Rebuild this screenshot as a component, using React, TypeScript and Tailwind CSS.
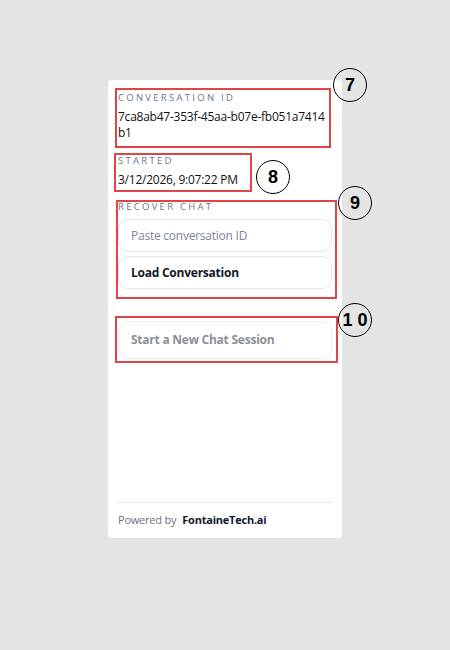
import React, { useState } from 'react';

const font = { fontFamily: '"Open Sans", "Noto Sans", sans-serif' };

const Marker: React.FC<{ label: string; className: string }> = ({ label, className }) => (
  <div
    className={`absolute w-[34px] h-[34px] rounded-full border-[1.5px] border-black flex items-center justify-center text-[18px] font-bold text-black ${className}`}
    style={{ fontFamily: '"Liberation Sans", Arial, sans-serif' }}
  >
    {label}
  </div>
);

const App: React.FC = () => {
  const [recoverId, setRecoverId] = useState('');

  return (
    <div className="min-h-[650px] w-full bg-[#e4e4e4] pt-[80px]" style={font}>
      <div className="relative mx-auto w-[234px] h-[458px] bg-white rounded-[4px] flex flex-col px-2.5 pt-[12px] pb-[10px]">
        <div className="text-[9.5px] tracking-[0.24em] uppercase text-[#6b7789] leading-[12px]">Conversation ID</div>
        <div className="mt-[5px] pr-[4px] text-[12px] leading-[16px] tracking-[-0.02em] text-[#111] break-all">
          7ca8ab47-353f-45aa-b07e-fb051a7414b1
        </div>

        <div className="mt-[14px] text-[9.5px] tracking-[0.24em] uppercase text-[#6b7789] leading-[12px]">Started</div>
        <div className="mt-[5px] text-[12px] leading-[16px] tracking-[-0.02em] text-[#111]">3/12/2026, 9:07:22 PM</div>

        <div className="mt-[13px] text-[9.5px] tracking-[0.24em] uppercase text-[#6b7789] leading-[12px]">Recover Chat</div>
        <input
          value={recoverId}
          onChange={(e) => setRecoverId(e.target.value)}
          placeholder="Paste conversation ID"
          className="mt-[6px] h-[33px] w-full rounded-[10px] border border-[#e3e5e8] px-3 text-[12px] tracking-[-0.02em] text-[#111] placeholder:text-[#7d8593] outline-none"
        />
        <button className="mt-[4px] h-[33px] w-full rounded-[10px] border border-[#e3e5e8] px-3 text-left text-[12px] tracking-[-0.02em] font-bold text-[#111827]">
          Load Conversation
        </button>

        <button className="mt-[32px] h-[38px] w-full rounded-[10px] border border-[#eceef0] px-3 text-left text-[12px] tracking-[-0.02em] font-bold text-[#8b8f96]">
          Start a New Chat Session
        </button>

        <div className="mt-auto border-t border-[#e5e7eb] pt-[9px] flex items-center text-[11px] leading-[16px] tracking-[-0.02em]">
          <span className="text-[#6b7280]">Powered by</span>
          <span className="ml-[6px] font-bold text-[#111827]">FontaineTech.ai</span>
        </div>

        {/* annotation overlays */}
        <div className="absolute left-[7px] top-[8px] w-[216px] h-[60px] border-2 border-[#e04444] pointer-events-none" />
        <div className="absolute left-[6px] top-[73px] w-[138px] h-[39px] border-2 border-[#e04444] pointer-events-none" />
        <div className="absolute left-[8px] top-[120px] w-[221px] h-[99px] border-2 border-[#e04444] pointer-events-none" />
        <div className="absolute left-[7px] top-[236px] w-[223px] h-[47px] border-2 border-[#e04444] pointer-events-none" />

        <Marker label="7" className="left-[225px] top-[-12px]" />
        <Marker label="8" className="left-[148px] top-[80px]" />
        <Marker label="9" className="left-[230px] top-[106px]" />
        <Marker label="1 0" className="left-[230px] top-[223px]" />
      </div>
    </div>
  );
};

export default App;
